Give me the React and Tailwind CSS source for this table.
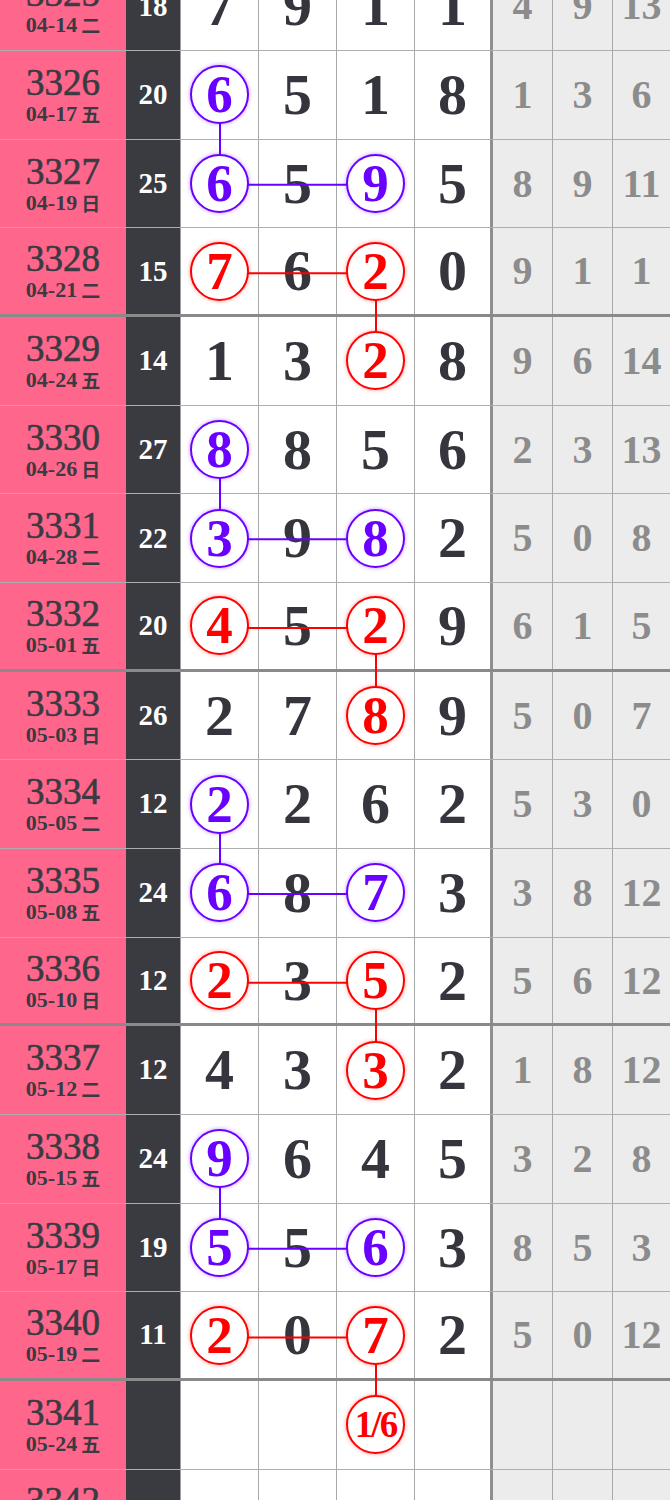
import React from 'react';

const ROW_H = 88.67;
const PURPLE = '#6a00ff';
const RED = '#ff0000';

// [期号, 日期, 星期, 和值, 四位号码, 三个间距]
const rows = [
  ['3325', '04-14', '二', '18', ['7', '9', '1', '1'], ['4', '9', '13']],
  ['3326', '04-17', '五', '20', ['6', '5', '1', '8'], ['1', '3', '6']],
  ['3327', '04-19', '日', '25', ['6', '5', '9', '5'], ['8', '9', '11']],
  ['3328', '04-21', '二', '15', ['7', '6', '2', '0'], ['9', '1', '1']],
  ['3329', '04-24', '五', '14', ['1', '3', '2', '8'], ['9', '6', '14']],
  ['3330', '04-26', '日', '27', ['8', '8', '5', '6'], ['2', '3', '13']],
  ['3331', '04-28', '二', '22', ['3', '9', '8', '2'], ['5', '0', '8']],
  ['3332', '05-01', '五', '20', ['4', '5', '2', '9'], ['6', '1', '5']],
  ['3333', '05-03', '日', '26', ['2', '7', '8', '9'], ['5', '0', '7']],
  ['3334', '05-05', '二', '12', ['2', '2', '6', '2'], ['5', '3', '0']],
  ['3335', '05-08', '五', '24', ['6', '8', '7', '3'], ['3', '8', '12']],
  ['3336', '05-10', '日', '12', ['2', '3', '5', '2'], ['5', '6', '12']],
  ['3337', '05-12', '二', '12', ['4', '3', '3', '2'], ['1', '8', '12']],
  ['3338', '05-15', '五', '24', ['9', '6', '4', '5'], ['3', '2', '8']],
  ['3339', '05-17', '日', '19', ['5', '5', '6', '3'], ['8', '5', '3']],
  ['3340', '05-19', '二', '11', ['2', '0', '7', '2'], ['5', '0', '12']],
  ['3341', '05-24', '五', '', ['', '', '1/6', ''], ['', '', '']],
  ['3342', '05-26', '日', '', ['', '', '', ''], ['', '', '']],
];

// circled cells: row index -> {col: color}
const circled = {};
[1, 5, 9, 13].forEach((a) => {
  circled[a] = { 0: PURPLE };
  circled[a + 1] = { 0: PURPLE, 2: PURPLE };
  circled[a + 2] = { 0: RED, 2: RED };
  circled[a + 3] = { 2: RED };
});

const COL1_X = 220;
const COL3_X = 376;
const cy = (i) => i * ROW_H + ROW_H / 2;

const Circle = ({ color, children, small }) => (
  <div
    className={`relative z-20 flex h-[59px] w-[59px] items-center justify-center rounded-full border-2 bg-white font-bold leading-none ${small ? 'text-[37px] tracking-[-2px]' : 'text-[53px]'}`}
    style={{ borderColor: color, color, boxShadow: `0 0 4px ${color}66` }}
  >
    {children}
  </div>
);

export default function App() {
  const lines = [];
  [1, 5, 9, 13].forEach((a) => {
    lines.push(<line key={`pv${a}`} x1={COL1_X} y1={cy(a)} x2={COL1_X} y2={cy(a + 1)} stroke={PURPLE} strokeWidth="2" />);
    lines.push(<line key={`ph${a}`} x1={COL1_X} y1={cy(a + 1)} x2={COL3_X} y2={cy(a + 1)} stroke={PURPLE} strokeWidth="2" />);
    lines.push(<line key={`rh${a}`} x1={COL1_X} y1={cy(a + 2)} x2={COL3_X} y2={cy(a + 2)} stroke={RED} strokeWidth="2" />);
    lines.push(<line key={`rv${a}`} x1={COL3_X} y1={cy(a + 2)} x2={COL3_X} y2={cy(a + 3)} stroke={RED} strokeWidth="2" />);
  });

  return (
    <div className="h-[1500px] w-[670px] overflow-hidden bg-white font-['Liberation_Serif','Noto_Sans_CJK_SC',serif]">
      <div className="relative -mt-[37.5px]">
        {rows.map(([id, date, wd, sum, nums, gaps], i) => {
          const thick = i % 4 === 3;
          return (
            <div
              key={id}
              className={`flex h-[88.67px] ${thick ? 'border-b-[3px] border-[#8a8a8a]' : 'border-b border-[#9a9a9a]/80'}`}
            >
              <div className="flex w-[126px] flex-col items-center justify-center bg-[#ff668c] text-[#3a3a42]">
                <div className="text-[37px] leading-[36px] [-webkit-text-stroke:0.6px_#3a3a42]">{id}</div>
                <div className="mt-[2px] flex items-center gap-[4px] text-[22px] font-bold leading-[22px]">
                  <span>{date}</span>
                  <span className="font-['Noto_Sans_CJK_SC',sans-serif] text-[19px]">{wd}</span>
                </div>
              </div>
              <div className="flex w-[55px] items-center justify-center border-r border-[#a0a0a0] bg-[#3a3a41] text-[29px] font-bold text-white">
                {sum}
              </div>
              {nums.map((n, c) => (
                <div
                  key={c}
                  className={`flex w-[78px] items-center justify-center text-[58px] font-bold leading-none text-[#35353d] ${c === 3 ? 'border-r-[3px] border-[#8f8f8f]' : 'border-r border-[#a8a8a8]'}`}
                >
                  {id === '3341' && c === 2 ? (
                    <Circle color={RED} small>{n}</Circle>
                  ) : circled[i] && circled[i][c] ? (
                    <Circle color={circled[i][c]}>{n}</Circle>
                  ) : (
                    n
                  )}
                </div>
              ))}
              {gaps.map((g, c) => (
                <div
                  key={c}
                  className={`flex items-center justify-center bg-[#ececec] text-[40px] font-bold leading-none text-[#8c8c8c] ${c === 2 ? 'flex-1' : 'w-[60px] border-r border-[#a8a8a8]'}`}
                >
                  {g}
                </div>
              ))}
            </div>
          );
        })}
        <svg className="pointer-events-none absolute left-0 top-0 z-10" width="670" height={rows.length * ROW_H}>
          {lines}
          <line x1={COL3_X} y1={cy(16) - 44} x2={COL3_X} y2={cy(16)} stroke={RED} strokeWidth="2" />
        </svg>
      </div>
    </div>
  );
}
